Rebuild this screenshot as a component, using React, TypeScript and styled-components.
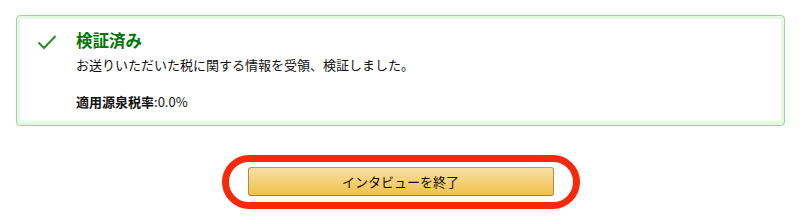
import * as React from 'react'
import styled, { createGlobalStyle } from 'styled-components'

const GlobalStyle = createGlobalStyle`
    body {
        margin: 0;
        background: #ffffff;
        font-family: "Noto Sans CJK JP", "Noto Sans", sans-serif;
        color: #111111;
    }
`

const Page = styled.div`
    padding: 15px 15px 0 16px;
    display: flex;
    flex-direction: column;
    align-items: stretch;
`

const Alert = styled.div`
    height: 111px;
    box-sizing: border-box;
    border: 1px solid #9fd59a;
    border-radius: 4px;
    box-shadow: inset 0 0 0 3px #e7f6e5;
    display: flex;
    padding: 13px 20px 0 20px;
`

const CheckIcon = styled.svg`
    width: 20px;
    height: 16px;
    margin-top: 5px;
    flex: none;
`

const Content = styled.div`
    margin-left: 19px;
    display: flex;
    flex-direction: column;
`

const Title = styled.div`
    color: #007600;
    font-weight: 700;
    font-size: 16.5px;
    line-height: 22px;
`

const Message = styled.div`
    font-size: 13px;
    line-height: 18px;
    margin-top: 5px;
    color: #111;
`

const Rate = styled.div`
    font-size: 13px;
    line-height: 18px;
    margin-top: 19px;
    b {
        font-weight: 700;
    }
`

const Footer = styled.div`
    display: flex;
    justify-content: center;
    margin-top: 29px;
`

const Highlight = styled.div`
    border: 7px solid #f52a0a;
    border-radius: 28px;
    padding: 5px 19px 6px 19px;
    display: flex;
`

const EndButton = styled.button`
    width: 306px;
    height: 29px;
    border: 1px solid #a88734;
    border-color: #c29d46 #b58d37 #9c7e31;
    border-radius: 3px;
    background: linear-gradient(to bottom, #f7dfa5, #f0c14b);
    font-family: "Noto Sans CJK JP", "Noto Sans", sans-serif;
    font-size: 13px;
    color: #111;
    cursor: pointer;
`

const App = () => {
    return (
        <Page>
            <GlobalStyle />
            <Alert>
                <CheckIcon viewBox="0 0 20 16">
                    <path d="M1.5 8.5 L7 14 L18.5 2" fill="none" stroke="#2d8a2d" strokeWidth="2" />
                </CheckIcon>
                <Content>
                    <Title>検証済み</Title>
                    <Message>お送りいただいた税に関する情報を受領、検証しました。</Message>
                    <Rate><b>適用源泉税率</b>:0.0%</Rate>
                </Content>
            </Alert>
            <Footer>
                <Highlight>
                    <EndButton>インタビューを終了</EndButton>
                </Highlight>
            </Footer>
        </Page>
    )
}

export default App
